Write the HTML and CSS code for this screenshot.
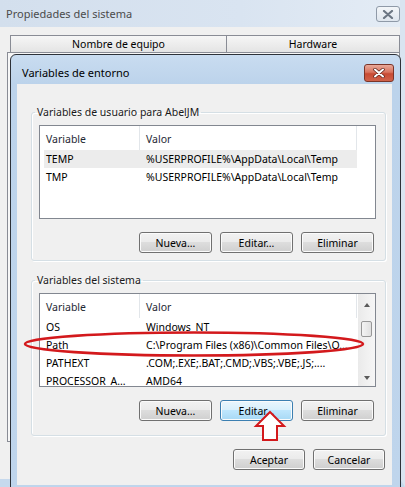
FILE: index.html
```html
<!DOCTYPE html>
<html lang="es">
<head>
<meta charset="UTF-8">
<title>Variables de entorno</title>
<link rel="stylesheet" href="styles.css">
</head>
<body>
<div class="sysprops">
  <div class="sp-title">
    <span class="sp-caption">Propiedades del sistema</span>
    <span class="sp-close">
      <svg width="12" height="9" viewBox="0 0 12 9"><path d="M2 1 L10 8 M10 1 L2 8" stroke="#6b7683" stroke-width="2.2" stroke-linecap="round"/></svg>
    </span>
  </div>
  <div class="sp-body">
    <div class="sp-tabs">
      <div class="sp-tab tab-name">Nombre de equipo</div>
      <div class="sp-tab tab-hw">Hardware</div>
    </div>
    <div class="sp-panel"></div>
  </div>
</div>

<div class="envdlg">
  <div class="env-title">
    <span class="env-caption">Variables de entorno</span>
    <span class="env-close">
      <svg width="14" height="10" viewBox="0 0 14 10"><path d="M3 1.5 L11 8.5 M11 1.5 L3 8.5" stroke="#5a1f17" stroke-width="3.4" stroke-linecap="round"/><path d="M3 1.5 L11 8.5 M11 1.5 L3 8.5" stroke="#fff" stroke-width="2" stroke-linecap="round"/></svg>
    </span>
  </div>
  <div class="env-client">
    <fieldset class="grp grp-user">
      <legend>Variables de usuario para AbelJM</legend>
      <div class="listview">
        <div class="lv-main">
          <div class="lv-head">
            <span class="hc hc-var">Variable</span>
            <span class="hc hc-val">Valor</span>
            <span class="hc hc-fill"></span>
          </div>
          <div class="lv-row sel"><span class="c-var">TEMP</span><span class="c-val">%USERPROFILE%\AppData\Local\Temp</span></div>
          <div class="lv-row"><span class="c-var">TMP</span><span class="c-val">%USERPROFILE%\AppData\Local\Temp</span></div>
        </div>
      </div>
      <div class="btnrow">
        <button class="btn">Nueva...</button>
        <button class="btn">Editar...</button>
        <button class="btn">Eliminar</button>
      </div>
    </fieldset>

    <fieldset class="grp grp-sys">
      <legend>Variables del sistema</legend>
      <div class="listview">
        <div class="lv-main">
          <div class="lv-head">
            <span class="hc hc-var">Variable</span>
            <span class="hc hc-val">Valor</span>
          </div>
          <div class="lv-row"><span class="c-var">OS</span><span class="c-val">Windows_NT</span></div>
          <div class="lv-row"><span class="c-var">Path</span><span class="c-val">C:\Program Files (x86)\Common Files\O...</span></div>
          <div class="lv-row"><span class="c-var">PATHEXT</span><span class="c-val">.COM;.EXE;.BAT;.CMD;.VBS;.VBE;.JS;....</span></div>
          <div class="lv-row"><span class="c-var">PROCESSOR_A...</span><span class="c-val">AMD64</span></div>
        </div>
        <div class="vscroll">
          <span class="sb-arrow up"></span>
          <span class="sb-track"><span class="sb-thumb"></span></span>
          <span class="sb-arrow down"></span>
        </div>
      </div>
      <div class="btnrow">
        <button class="btn">Nueva...</button>
        <button class="btn hot">Editar...</button>
        <button class="btn">Eliminar</button>
      </div>
    </fieldset>

    <div class="actions">
      <button class="btn">Aceptar</button>
      <button class="btn">Cancelar</button>
    </div>
  </div>
</div>

<svg class="marks" width="405" height="487" viewBox="0 0 405 487">
  <ellipse cx="194" cy="344" rx="169" ry="11.5" fill="none" stroke="#d3191c" stroke-width="2.6"/>
  <polygon points="270,412 284,426 277,426 277,440 263,440 263,426 256,426" fill="#fff" stroke="#d3191c" stroke-width="2" stroke-linejoin="miter"/>
</svg>
</body>
</html>
```

FILE: styles.css
```css
html,body{
  margin: 0;
  padding: 0;
}
body{
  position: relative;
  width: 405px;
  height: 487px;
  overflow: hidden;
  font-family: "Noto Sans", "Liberation Sans", sans-serif;
  font-size: 10.5px;
  color: #000;
  background: #f0f0f0;
}

/* ventana de fondo: Propiedades del sistema (inactiva) */
.sysprops{
  height: 487px;
  box-sizing: border-box;
  display: flex;
  flex-direction: column;
  border-right: 5px solid #d9e4f0;
  border-bottom: 8px solid #c6d9ed;
}
.sp-title{
  height: 27px;
  display: flex;
  align-items: center;
  justify-content: space-between;
  padding: 0 0 0 6px;
  background: linear-gradient(90deg, #d3dfed 0%, #d9e4f1 60%, #e4ecf5 100%);
  color: #4b4b4b;
  font-size: 11px;
}
.sp-close{
  width: 22px;
  height: 14px;
  display: flex;
  align-items: center;
  justify-content: center;
  border: 1px solid #8f9aa8;
  border-radius: 3px;
  background: linear-gradient(#f3f6f9, #dfe6ee);
  margin-top: 1px;
}
.sp-body{
  flex: 1;
  display: flex;
  flex-direction: column;
  padding: 8px 0 37px 7px;
  background: #f0f0f0;
}
.sp-tabs{
  display: flex;
  height: 17px;
  padding-left: 3px;
}
.sp-tab{
  box-sizing: border-box;
  border: 1px solid #898c95;
  border-bottom: 0;
  background: linear-gradient(#f6f6f6, #e4e4e4);
  text-align: center;
  line-height: 16px;
}
.tab-name{ width: 217px; }
.tab-hw{ flex: 1; border-left: 0; }
.sp-panel{
  flex: 1;
  border: 1px solid #898c95;
  background: #f7f7f7;
}

/* dialogo activo: Variables de entorno */
.envdlg{
  position: absolute;
  left: 10px;
  top: 54px;
  width: 391px;
  height: 440px;
  box-sizing: border-box;
  display: flex;
  flex-direction: column;
  padding: 0 8px 8px 6px;
  border: 1px solid #2d3138;
  border-radius: 6px 6px 0 0;
  background: linear-gradient(#c9dcf0 0, #bcd3eb 29px, #bfd5ec 100%);
}
.env-title{
  height: 23px;
  padding-top: 6px;
  display: flex;
  align-items: center;
  justify-content: space-between;
  font-size: 11px;
}
.env-caption{ padding-left: 5px; }
.env-close{
  width: 30px;
  height: 18px;
  box-sizing: border-box;
  margin-right: -2px;
  display: flex;
  align-items: center;
  justify-content: center;
  border: 1px solid #7b3428;
  border-radius: 3px;
  background: linear-gradient(#e9a999 0%, #d9745f 45%, #c84a33 55%, #d0624a 100%);
}
.env-client{
  flex: 1;
  display: flex;
  flex-direction: column;
  padding: 20px 6px 0 14px;
  background: #f0f0f0;
}

.grp{
  margin: 0;
  padding: 5px 9px 7px 7px;
  min-width: 0;
  border: 1px solid #d5dfe5;
  border-radius: 3px;
  box-shadow: inset 1px 1px 0 #fff, 1px 1px 0 #fff;
}
.grp legend{
  margin-left: -4px;
  padding: 0 2px;
  line-height: 16px;
  color: #1a1a1a;
}
.grp-sys{
  margin-top: 11px;
  padding-bottom: 14px;
}

.listview{
  height: 94px;
  box-sizing: border-box;
  display: flex;
  border: 1px solid #828790;
  background: #fff;
  overflow: hidden;
}
.lv-main{
  flex: 1;
}
.lv-head{
  display: flex;
  height: 24px;
  align-items: stretch;
}
.hc{
  box-sizing: border-box;
  display: flex;
  align-items: center;
  padding: 2px 0 0 6px;
  border-right: 1px solid #e2e6ea;
  color: #1e2833;
}
.hc-var{ width: 100px; }
.hc-val{ width: 217px; }
.hc-fill{ flex: 1; border-right: 0; }
.lv-row{
  display: flex;
  align-items: center;
  height: 18px;
  width: 313px;
  margin-left: 4px;
}
.lv-row.sel{
  background: #ececec;
}
.c-var{
  width: 96px;
  padding-left: 2px;
  box-sizing: border-box;
  white-space: nowrap;
}
.c-val{
  padding-left: 6px;
  white-space: nowrap;
}

.vscroll{
  width: 17px;
  display: flex;
  flex-direction: column;
  align-items: center;
  background: linear-gradient(90deg, #eaeaea, #f6f6f6);
}
.sb-arrow{
  height: 17px;
  width: 17px;
  display: flex;
  align-items: center;
  justify-content: center;
}
.sb-arrow::before{
  content: "";
  border-left: 3.5px solid transparent;
  border-right: 3.5px solid transparent;
}
.sb-arrow.up::before{ border-bottom: 4px solid #5a5a5a; margin-top: 4px; }
.sb-arrow.down::before{ border-top: 4px solid #5a5a5a; margin-top: 1px; }
.sb-track{
  flex: 1;
  width: 17px;
  display: flex;
  justify-content: center;
}
.sb-thumb{
  width: 11px;
  height: 16px;
  margin-top: 10px;
  box-sizing: border-box;
  border: 1px solid #979797;
  border-radius: 2px;
  background: linear-gradient(90deg, #f3f3f3, #e0e0e0);
}

.btnrow{
  display: flex;
  justify-content: flex-end;
  gap: 8px;
  margin: 13px 2px 0 0;
}
.btn{
  width: 73px;
  height: 21px;
  box-sizing: border-box;
  padding: 0;
  border: 1px solid #707070;
  border-radius: 3px;
  background: linear-gradient(#f2f2f2 0%, #ebebeb 45%, #dddddd 50%, #cfcfcf 100%);
  box-shadow: inset 0 0 0 1px #fbfbfb;
  font: inherit;
  color: #000;
}
.btn.hot{
  border-color: #3c7fb1;
  background: linear-gradient(#eaf6fd 0%, #d9f0fc 45%, #bee6fd 50%, #a7d9f5 100%);
}
.actions{
  display: flex;
  justify-content: flex-end;
  gap: 8px;
  margin: 13px 1px 0 0;
}
.actions .btn{ width: 72px; }

.marks{
  position: absolute;
  left: 0;
  top: 0;
  pointer-events: none;
}
```
